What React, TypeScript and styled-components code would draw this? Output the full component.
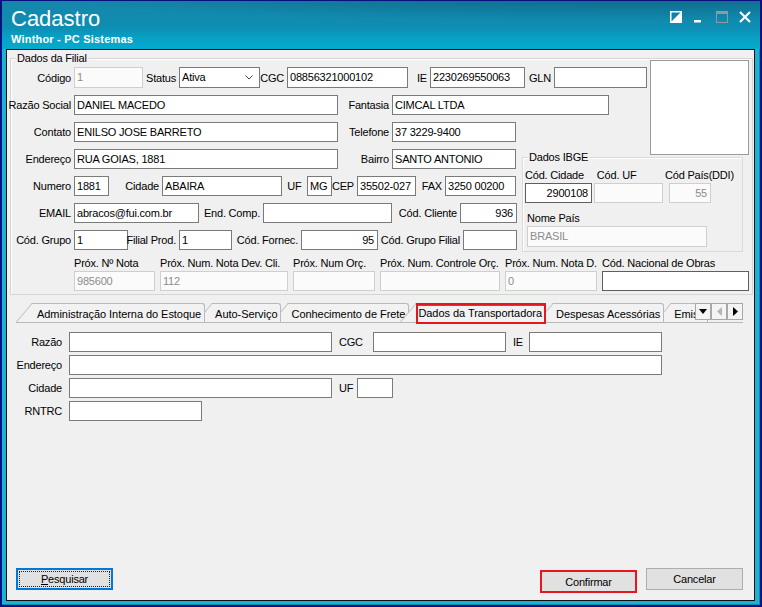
import React from 'react';
import styled, { createGlobalStyle } from 'styled-components';

const GlobalStyle = createGlobalStyle`
  html, body {
    margin: 0;
    padding: 0;
    background: #f0f0f0;
  }
  body {
    font-family: "Liberation Sans", Arial, sans-serif;
    font-size: 11px;
    letter-spacing: -0.2px;
    color: #000;
  }
`;

const Window = styled.div`
  width: 762px;
  height: 607px;
  box-sizing: border-box;
  padding: 1px 2px 2px 2px;
  background: #06107f;
  display: flex;
`;

const Frame = styled.div`
  flex: 1;
  display: flex;
  flex-direction: column;
  background: #1ab4d2;
  box-shadow: inset -1px -1px 0 #0a8bb0;
`;

const TitleBar = styled.div`
  flex: none;
  height: 48px;
  box-sizing: border-box;
  display: flex;
  justify-content: space-between;
  padding: 6px 9px 0 9px;
  color: #fff;
  background:
    radial-gradient(120% 90% at 85% -20%, rgba(6, 70, 100, 0.55) 0%, rgba(6, 70, 100, 0) 70%),
    linear-gradient(180deg, #1487ab 0%, #0f8db2 55%, #07a2c6 78%, #05aacd 100%);
`;

const Caption = styled.div`
  display: flex;
  flex-direction: column;
`;

const CaptionTitle = styled.div`
  font-size: 22px;
  line-height: 24px;
  letter-spacing: 0;
`;

const CaptionSub = styled.div`
  font-size: 11px;
  font-weight: bold;
  line-height: 13px;
  letter-spacing: 0.2px;
  margin-top: 2px;
`;

const Controls = styled.div`
  display: flex;
  gap: 11px;
  margin-top: 4px;
`;

const Content = styled.div`
  flex: 1;
  min-height: 0;
  display: flex;
  flex-direction: column;
  margin: 0 5px 4px 4px;
  border: 1px solid #111;
  background: #f0f0f0;
`;

const GroupBox = styled.div`
  position: relative;
  margin: 8px 1px 0 3px;
  padding: 1px 0 3px 0;
  border: 1px solid #d5d5d5;
  box-shadow: inset 1px 1px 0 #fff;
`;

const GroupTitle = styled.span`
  position: absolute;
  top: -8px;
  left: 5px;
  padding: 0 1px;
  line-height: 14px;
  background: #f0f0f0;
`;

const Block = styled.div`
  display: flex;
  align-items: flex-start;
  gap: ${(p: { $gap: number }) => p.$gap}px;
`;

const Rows = styled.div<{ $w: number; $top?: number }>`
  flex: none;
  width: ${(p) => p.$w}px;
  padding-top: ${(p) => p.$top ?? 0}px;
  display: flex;
  flex-direction: column;
  gap: 7px;
`;

const Row = styled.div<{ $gap?: number; $h?: number }>`
  display: flex;
  align-items: center;
  gap: ${(p) => p.$gap ?? 3}px;
  height: ${(p) => p.$h ?? 20}px;
`;

const Label = styled.span<{ $w?: number; $align?: 'left' | 'right' | 'center' }>`
  flex: none;
  width: ${(p) => (p.$w ? `${p.$w}px` : 'auto')};
  display: flex;
  justify-content: ${(p) =>
    p.$align === 'left' ? 'flex-start' : p.$align === 'center' ? 'center' : 'flex-end'};
  white-space: nowrap;
  line-height: 14px;
`;

const Field = styled.div<{ $w: number; $h?: number; $right?: boolean; $off?: boolean; $strong?: boolean }>`
  flex: none;
  box-sizing: border-box;
  width: ${(p) => p.$w}px;
  height: ${(p) => p.$h ?? 20}px;
  padding: 0 3px 0 2px;
  border: 1px solid ${(p) => (p.$off ? '#cfcfcf' : p.$strong ? '#5e5e5e' : '#7a7a7a')};
  background: ${(p) => (p.$off ? '#fbfbfb' : '#fff')};
  color: ${(p) => (p.$off ? '#8c8c8c' : '#000')};
  line-height: ${(p) => (p.$h ?? 20) - 2}px;
  text-align: ${(p) => (p.$right ? 'right' : 'left')};
  white-space: nowrap;
  overflow: hidden;
`;

const Combo = styled(Field)`
  display: flex;
  align-items: center;
  justify-content: space-between;
  padding-right: 6px;
`;

const PhotoBox = styled.div`
  flex: none;
  width: 99px;
  height: 95px;
  box-sizing: border-box;
  margin-bottom: -6px;
  border: 1px solid #9a9a9a;
  background: #fff;
`;

const IbgeBox = styled.div`
  position: relative;
  flex: none;
  width: 221px;
  height: 95px;
  box-sizing: border-box;
  margin-top: 8px;
  padding: 10px 0 0 2px;
  border: 1px solid #dadada;
  box-shadow: inset 1px 1px 0 #fff;
`;

const Stack = styled.div<{ $w?: number; $pl?: number; $mt?: number }>`
  flex: none;
  width: ${(p) => (p.$w ? `${p.$w}px` : 'auto')};
  padding-left: ${(p) => p.$pl ?? 0}px;
  margin-top: ${(p) => p.$mt ?? 0}px;
  display: flex;
  flex-direction: column;
  gap: 1px;
`;

const StackRow = styled.div<{ $gap: number; $pl?: number; $mt?: number }>`
  display: flex;
  gap: ${(p) => p.$gap}px;
  padding-left: ${(p) => p.$pl ?? 0}px;
  margin-top: ${(p) => p.$mt ?? 0}px;
`;

const TabStrip = styled.div`
  display: flex;
  align-items: flex-start;
  width: 727px;
  height: 19px;
  margin: 8px 0 0 9px;
  border-bottom: 1px solid #b9b9b9;
`;

const TabList = styled.div`
  flex: none;
  width: 679px;
  display: flex;
`;

const Tab = styled.div<{ $z: number; $first?: boolean }>`
  position: relative;
  z-index: ${(p) => p.$z};
  flex: none;
  height: 19px;
  box-sizing: border-box;
  margin-left: ${(p) => (p.$first ? 0 : -9)}px;
  padding: 4px 4px 0 ${(p) => (p.$first ? 21 : 19)}px;
  line-height: 14px;
  letter-spacing: -0.05px;
  white-space: nowrap;

  &::before {
    content: '';
    position: absolute;
    left: 0;
    top: 0;
    bottom: 0;
    width: 32px;
    background: #f2f2f2;
    border-top: 1px solid #b9b9b9;
    border-left: 1px solid #b9b9b9;
    transform: skewX(-40deg);
    transform-origin: bottom left;
    z-index: -1;
  }

  &::after {
    content: '';
    position: absolute;
    left: 16px;
    top: 0;
    bottom: 0;
    right: 0;
    background: #f2f2f2;
    border-top: 1px solid #b9b9b9;
    border-right: 1px solid #b9b9b9;
    border-top-right-radius: 3px;
    z-index: -1;
  }
`;

const ActiveTab = styled(Tab)`
  padding: 0 0 0 16px;
`;

const ActiveText = styled.span`
  display: block;
  box-sizing: border-box;
  height: 21px;
  padding: 0 2px 0 0;
  border: 2px solid #e5161d;
  box-shadow: inset 0 1px 0 #2f6fd8;
  line-height: 17px;
`;

const ScrollButtons = styled.div`
  position: relative;
  z-index: 20;
  display: flex;
`;

const ScrollButton = styled.div`
  width: 16px;
  height: 17px;
  box-sizing: border-box;
  border: 1px solid #a8a8a8;
  background: #f4f4f4;
  display: flex;
  align-items: center;
  justify-content: center;
`;

const TabPage = styled.div`
  margin-top: 9px;
  padding-left: 2px;
  display: flex;
  flex-direction: column;
  gap: 3px;
`;

const Spacer = styled.div`
  flex: 1;
`;

const Footer = styled.div`
  display: flex;
  align-items: flex-start;
  padding: 0 11px 7px 9px;
`;

const Button = styled.div<{ $tone?: 'focus' | 'mark' }>`
  box-sizing: border-box;
  width: 97px;
  height: ${(p) => (p.$tone === 'mark' ? 23 : 22)}px;
  margin-top: ${(p) => (p.$tone === 'mark' ? 2 : 0)}px;
  border: ${(p) =>
    p.$tone === 'focus' ? '2px solid #0078d7' : p.$tone === 'mark' ? '2px solid #e5161d' : '1px solid #adadad'};
  background: #e1e1e1;
  display: flex;
  align-items: center;
  justify-content: center;
  position: relative;
  color: #000;
`;

const FocusRing = styled.span`
  position: absolute;
  inset: 1px;
  border: 1px dotted #222;
`;

const Gap = styled.div`
  flex: 1;
`;

const ButtonPair = styled.div`
  display: flex;
  gap: 9px;
  align-items: flex-start;
`;

const Chevron = () => (
  <svg width="8" height="5" viewBox="0 0 8 5">
    <path d="M0.5 0.5 L4 4 L7.5 0.5" fill="none" stroke="#444" strokeWidth="1" />
  </svg>
);

const CaptionButtons = () => (
  <Controls>
    <svg width="12" height="12" viewBox="0 0 12 12">
      <rect x="0.75" y="0.75" width="10.5" height="10.5" fill="none" stroke="#fff" strokeWidth="1.5" />
      <polygon points="0,12 12,0 12,12" fill="#fff" />
    </svg>
    <svg width="12" height="12" viewBox="0 0 12 12">
      <rect x="1" y="9" width="7" height="2.5" fill="#fff" />
    </svg>
    <svg width="12" height="12" viewBox="0 0 12 12">
      <rect x="0.5" y="0.5" width="11" height="11" fill="none" stroke="#8d9aa3" strokeWidth="1" />
      <rect x="0" y="0" width="12" height="3" fill="#8d9aa3" />
    </svg>
    <svg width="12" height="12" viewBox="0 0 12 12">
      <path d="M1 1 L11 11 M11 1 L1 11" stroke="#fff" strokeWidth="2" />
    </svg>
  </Controls>
);

const proximos = [
  { label: 'Próx. Nº Nota', w: 81, value: '985600' },
  { label: 'Próx. Num. Nota Dev. Cli.', w: 128, value: '112' },
  { label: 'Próx. Num Orç.', w: 82, value: '' },
  { label: 'Próx. Num. Controle Orç.', w: 120, value: '' },
  { label: 'Próx. Num. Nota D.', w: 92, value: '0' },
  { label: 'Cód. Nacional de Obras', w: 147, value: '', enabled: true },
];

const App = () => {
  return (
    <>
      <GlobalStyle />
      <Window>
        <Frame>
          <TitleBar>
            <Caption>
              <CaptionTitle>Cadastro</CaptionTitle>
              <CaptionSub>Winthor - PC Sistemas</CaptionSub>
            </Caption>
            <CaptionButtons />
          </TitleBar>

          <Content>
            <GroupBox>
              <GroupTitle>Dados da Filial</GroupTitle>

              <Block $gap={3}>
                <Rows $w={636} $top={7}>
                  <Row $h={21}>
                    <Label $w={60}>Código</Label>
                    <Field $w={69} $h={21} $off>1</Field>
                    <Label $w={30}>Status</Label>
                    <Combo $w={81} $h={21}>
                      <span>Ativa</span>
                      <Chevron />
                    </Combo>
                    <Label $w={21}>CGC</Label>
                    <Field $w={121} $h={21}>08856321000102</Field>
                    <Label $w={16}>IE</Label>
                    <Field $w={95} $h={21}>2230269550063</Field>
                    <Label $w={23}>GLN</Label>
                    <Field $w={93} $h={21} />
                  </Row>
                  <Row>
                    <Label $w={60}>Razão Social</Label>
                    <Field $w={264}>DANIEL MACEDO</Field>
                    <Label $w={48}>Fantasia</Label>
                    <Field $w={217}>CIMCAL LTDA</Field>
                  </Row>
                  <Row>
                    <Label $w={60}>Contato</Label>
                    <Field $w={264}>ENILSO JOSE BARRETO</Field>
                    <Label $w={48}>Telefone</Label>
                    <Field $w={124}>37 3229-9400</Field>
                  </Row>
                </Rows>
                <PhotoBox />
              </Block>

              <Block $gap={5}>
                <Rows $w={506}>
                  <Row>
                    <Label $w={60}>Endereço</Label>
                    <Field $w={264}>RUA GOIAS, 1881</Field>
                    <Label $w={48}>Bairro</Label>
                    <Field $w={124}>SANTO ANTONIO</Field>
                  </Row>
                  <Row>
                    <Label $w={60}>Numero</Label>
                    <Field $w={35}>1881</Field>
                    <Label $w={47}>Cidade</Label>
                    <Field $w={120}>ABAIRA</Field>
                    <Label $w={19} $align="center">UF</Label>
                    <Field $w={25}>MG</Field>
                    <Label $w={19}>CEP</Label>
                    <Field $w={59}>35502-027</Field>
                    <Label $w={23}>FAX</Label>
                    <Field $w={71}>3250 00200</Field>
                  </Row>
                  <Row>
                    <Label $w={60}>EMAIL</Label>
                    <Field $w={125}>abracos@fui.com.br</Field>
                    <Label $w={58}>End. Comp.</Label>
                    <Field $w={129} />
                    <Label $w={62}>Cód. Cliente</Label>
                    <Field $w={57} $right>936</Field>
                  </Row>
                  <Row>
                    <Label $w={60}>Cód. Grupo</Label>
                    <Field $w={54}>1</Field>
                    <Label $w={45}>Filial Prod.</Label>
                    <Field $w={53}>1</Field>
                    <Label $w={63}>Cód. Fornec.</Label>
                    <Field $w={77} $right>95</Field>
                    <Label $w={79}>Cód. Grupo Filial</Label>
                    <Field $w={54} />
                  </Row>
                </Rows>

                <IbgeBox>
                  <GroupTitle>Dados IBGE</GroupTitle>
                  <StackRow $gap={2}>
                    <Stack $w={67}>
                      <Label $align="left">Cód. Cidade</Label>
                      <Field $w={67} $right $strong>2900108</Field>
                    </Stack>
                    <Stack $w={69}>
                      <Label $align="left">&nbsp;Cód. UF</Label>
                      <Field $w={69} $off />
                    </Stack>
                    <Stack>
                      <Label $align="left">Cód País(DDI)</Label>
                      <Stack $pl={4}>
                        <Field $w={42} $right $off>55</Field>
                      </Stack>
                    </Stack>
                  </StackRow>
                  <Stack $pl={2} $mt={8}>
                    <Label $align="left">Nome País</Label>
                    <Field $w={180} $h={21} $off>BRASIL</Field>
                  </Stack>
                </IbgeBox>
              </Block>

              <StackRow $gap={5} $pl={63} $mt={4}>
                {proximos.map((p) => (
                  <Stack key={p.label} $w={p.w}>
                    <Label $align="left">{p.label}</Label>
                    <Field $w={p.w} $off={!p.enabled} $strong={p.enabled}>
                      {p.value}
                    </Field>
                  </Stack>
                ))}
              </StackRow>
            </GroupBox>

            <TabStrip>
              <TabList>
                <Tab $z={9} $first>Administração Interna do Estoque</Tab>
                <Tab $z={8}>Auto-Serviço</Tab>
                <Tab $z={7}>Conhecimento de Frete</Tab>
                <ActiveTab $z={10}>
                  <ActiveText>Dados da Transportadora</ActiveText>
                </ActiveTab>
                <Tab $z={5}>Despesas Acessórias</Tab>
                <Tab $z={4}>Emiss</Tab>
              </TabList>
              <ScrollButtons>
                <ScrollButton>
                  <svg width="8" height="5" viewBox="0 0 8 5">
                    <polygon points="0,0 8,0 4,5" fill="#000" />
                  </svg>
                </ScrollButton>
                <ScrollButton>
                  <svg width="5" height="9" viewBox="0 0 5 9">
                    <polygon points="5,0 5,9 0,4.5" fill="#b5b5b5" />
                  </svg>
                </ScrollButton>
                <ScrollButton>
                  <svg width="5" height="9" viewBox="0 0 5 9">
                    <polygon points="0,0 0,9 5,4.5" fill="#000" />
                  </svg>
                </ScrollButton>
              </ScrollButtons>
            </TabStrip>

            <TabPage>
              <Row $gap={7}>
                <Label $w={53}>Razão</Label>
                <Field $w={263} />
                <Label $w={27} $align="left">CGC</Label>
                <Field $w={133} />
                <Label $w={9} $align="left">IE</Label>
                <Field $w={133} />
              </Row>
              <Row $gap={7}>
                <Label $w={53}>Endereço</Label>
                <Field $w={593} />
              </Row>
              <Row $gap={7}>
                <Label $w={53}>Cidade</Label>
                <Field $w={263} />
                <Label $w={11} $align="left">UF</Label>
                <Field $w={36} />
              </Row>
              <Row $gap={7}>
                <Label $w={53}>RNTRC</Label>
                <Field $w={133} />
              </Row>
            </TabPage>

            <Spacer />

            <Footer>
              <Button $tone="focus">
                <FocusRing />
                <span>
                  <u>P</u>esquisar
                </span>
              </Button>
              <Gap />
              <ButtonPair>
                <Button $tone="mark">Confirmar</Button>
                <Button>Cancelar</Button>
              </ButtonPair>
            </Footer>
          </Content>
        </Frame>
      </Window>
    </>
  );
};

export default App;
